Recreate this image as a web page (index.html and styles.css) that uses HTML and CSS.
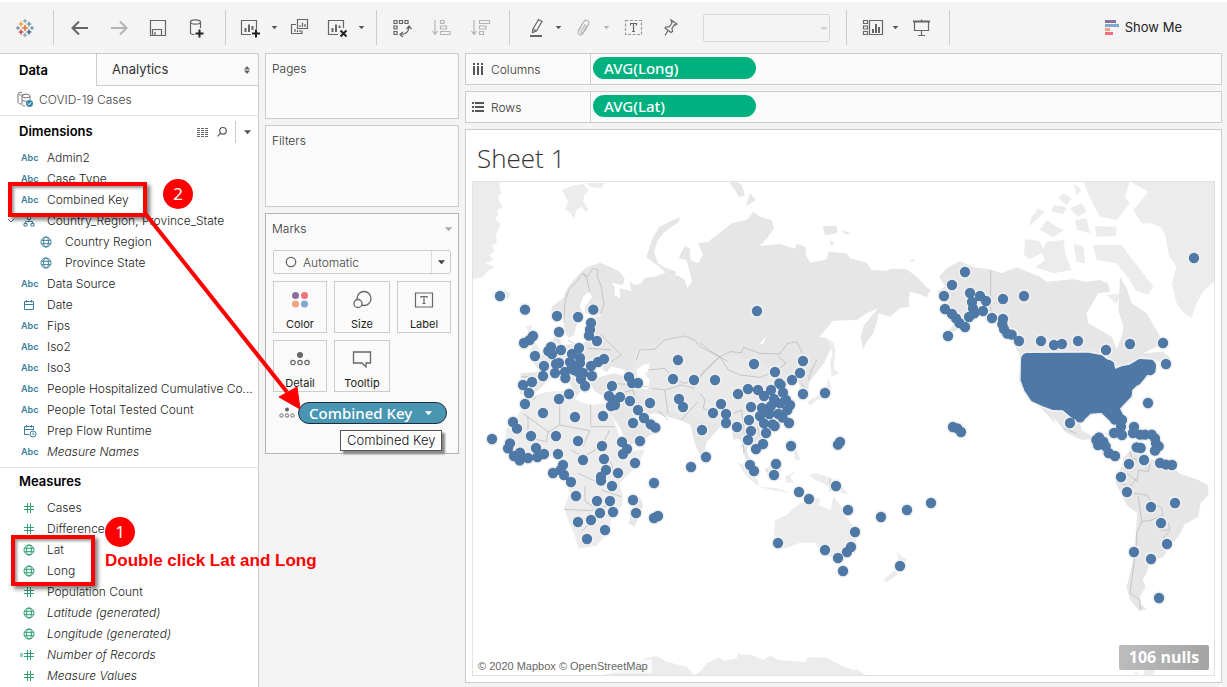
FILE: index.html
```html
<!DOCTYPE html>
<html lang="en">
<head>
<meta charset="utf-8">
<title>Sheet 1</title>
<link rel="stylesheet" href="styles.css">
</head>
<body>
<svg class="sprite" aria-hidden="true">
  <symbol id="globe" viewBox="0 0 12 12"><g fill="none" stroke="currentColor"><circle cx="6" cy="6" r="5"/><ellipse cx="6" cy="6" rx="2.4" ry="5"/><path d="M1.500 4.300h9M1.500 7.700h9"/></g></symbol>
  <symbol id="hash" viewBox="0 0 12 12"><path d="M4.500 1v10M7.500 1v10M1 4.500h10M1 7.500h10" fill="none" stroke="currentColor"/></symbol>
  <symbol id="date" viewBox="0 0 12 12"><path d="M1.500 2.500h9v8h-9zM1.500 5.500h9M3.500 1v2.500M8.500 1v2.500" fill="none" stroke="currentColor"/></symbol>
  <symbol id="caret" viewBox="0 0 10 6"><path d="M1 1h8L5 5.500z" fill="currentColor"/></symbol>
</svg>

<header class="toolbar">
  <button class="tool" aria-label="Start page"><svg viewBox="0 0 24 24" fill="none" stroke-width="1.500"><path d="M12 9v6M9 12h6" stroke="#e8762c" stroke-width="1.600"/><path d="M8 5.500v5M5.500 8h5" stroke="#eb9129"/><path d="M16 5.500v5M13.500 8h5" stroke="#5b879b"/><path d="M8 13.500v5M5.500 16h5" stroke="#c72035"/><path d="M16 13.500v5M13.500 16h5" stroke="#1f457e"/><path d="M12 3v4M10 5h4M12 17v4M10 19h4" stroke="#7099a6" stroke-width="1"/><path d="M5 10v4M3 12h4M19 10v4M17 12h4" stroke="#59879b" stroke-width="1"/></svg></button>
  <span class="sep"></span>
  <button class="tool" aria-label="Undo"><svg viewBox="0 0 24 24"><path d="M20 12H5M11 5.500L4.500 12l6.500 6.500" stroke-width="2"/></svg></button>
  <button class="tool off" aria-label="Redo"><svg viewBox="0 0 24 24"><path d="M4 12h15M13 5.500l6.500 6.500-6.500 6.500" stroke-width="2"/></svg></button>
  <button class="tool" aria-label="Save"><svg viewBox="0 0 24 24"><path d="M4.500 4.500h15v15h-15zM6.500 19v-5.500h9V19M9 19v-3"/></svg></button>
  <button class="tool" aria-label="New data source"><svg viewBox="0 0 24 24"><ellipse cx="10.500" cy="6" rx="5" ry="2.200"/><path d="M5.500 6v11c0 1 2 1.500 4 1.500M15.500 6v6"/><path d="M14.500 13.500v8M10.500 17.500h8" class="strong"/></svg></button>
  <span class="sep"></span>
  <button class="tool" aria-label="New worksheet"><svg viewBox="0 0 24 24"><path d="M11 18.500H1.500v-14h15V13"/><path d="M5.500 16v-4M9 16V8.500M12.500 14V10" stroke-width="2"/><path d="M16 13.500v8M12 17.500h8" class="strong"/></svg></button>
  <button class="caret" aria-label="New worksheet options"><svg viewBox="0 0 10 6"><use href="#caret"/></svg></button>
  <button class="tool" aria-label="Duplicate"><svg viewBox="0 0 24 24"><path d="M9.500 3.500h10v9h-10zM8 8.500H3.500v9H14V14.500M12 11V9M14.500 11V6.500M17 11V8M7 16v-3M9.500 16v-2M12 16v-2"/></svg></button>
  <button class="tool" aria-label="Clear sheet"><svg viewBox="0 0 24 24"><path d="M11 18.500H1.500v-14h15V12"/><path d="M5.500 16v-4M9 16V8.500M12.500 12V9.500" stroke-width="2"/><path d="M13.500 14.500l6 6M19.500 14.500l-6 6" class="strong"/></svg></button>
  <button class="caret" aria-label="Clear options"><svg viewBox="0 0 10 6"><use href="#caret"/></svg></button>
  <span class="sep tight"></span>
  <button class="tool" aria-label="Swap rows and columns"><svg viewBox="0 0 24 24"><path d="M3 4.500h3v3H3zM8.500 4.500h3v3h-3zM14 4.500h3v3h-3zM3 10h3v3H3zM3 15.500h3v3H3zM9 18.500c6 0 9-3 9-8M15.500 13l2.500-3 2.500 3M12 16l-3 2.500 3 2.500"/></svg></button>
  <button class="tool off" aria-label="Sort ascending"><svg viewBox="0 0 24 24"><path d="M5 4v13M2.500 15L5 18.500 7.500 15M10.500 4.500h3.500v3h-3.500zM10.500 10h6v3h-6zM10.500 15.500h9.500v3h-9.500z"/></svg></button>
  <button class="tool off" aria-label="Sort descending"><svg viewBox="0 0 24 24"><path d="M5 4v13M2.500 15L5 18.500 7.500 15M10.500 4.500h10v3h-10zM10.500 10h6.500v3h-6.500zM10.500 15.500h4v3h-4z"/></svg></button>
  <span class="sep"></span>
  <button class="tool" aria-label="Highlight"><svg viewBox="0 0 24 24"><path d="M9 13L14.500 3.500l3.500 2-5.500 9.500L8.500 16.500zM9 13l3.500 2"/><path d="M6 20h12" stroke-width="2"/></svg></button>
  <button class="caret" aria-label="Highlight options"><svg viewBox="0 0 10 6"><use href="#caret"/></svg></button>
  <button class="tool off" aria-label="Group members"><svg viewBox="0 0 24 24"><path d="M6.500 14l5-8c2-3.500 7-1.500 5 2.500l-5.500 9c-2 3-6.500 1-4.500-2.500l4.500-8M13.500 8L9 15.500c-1 1.500 1 2.500 2 1l4-7"/></svg></button>
  <button class="caret off" aria-label="Group options"><svg viewBox="0 0 10 6"><use href="#caret"/></svg></button>
  <button class="tool" aria-label="Show mark labels"><svg viewBox="0 0 24 24"><path d="M5.500 4.500h16v14h-16z" stroke-dasharray="3 1.500" class="light"/><path d="M10.500 9.500V7.500h6v2M13.500 7.500v8M12 15.500h3"/></svg></button>
  <button class="tool" aria-label="Fix axes"><svg viewBox="0 0 24 24"><path d="M12 4l6 4-1.500 1-1-.5-2.500 4 .5 3-1.500 1-6-4.500 1.500-1 3-.3 2.500-4zM9 14.500L6 19.500"/></svg></button>
  <select class="fit" aria-label="Fit" disabled><option></option></select>
  <span class="sep"></span>
  <button class="tool" aria-label="Show cards"><svg viewBox="0 0 24 24"><path d="M2.500 4.500h4v3h-4zM2.500 10h4v3h-4zM2.500 15.500h4v3h-4zM8.500 4.500h13v14h-13z"/><path d="M12 17v-4M15 17V8M18 17v-6" stroke-width="2"/></svg></button>
  <button class="caret" aria-label="Card options"><svg viewBox="0 0 10 6"><use href="#caret"/></svg></button>
  <button class="tool" aria-label="Presentation mode"><svg viewBox="0 0 24 24"><path d="M5.500 6v8.500h14V6M12.500 14.500v4.500M9 19.500h7M12.500 3.500v2"/><path d="M4 5.500h17" stroke-width="2"/></svg></button>
  <span class="sep"></span>
  <button class="showme"><svg viewBox="0 0 14 15" aria-hidden="true"><path d="M0 0h11v3H0z" fill="#8a6f9c"/><path d="M0 4h14v3H0z" fill="#82a6cd"/><path d="M0 8h5v3H0z" fill="#f2a27e"/><path d="M0 12h8v3H0z" fill="#f56f7e"/></svg>Show Me</button>
</header>

<div class="workspace">
  <aside class="data">
    <div class="tabs">
      <button class="tab active">Data</button>
      <button class="tab">Analytics<svg viewBox="0 0 6 8" aria-hidden="true"><path d="M0 3.500L3 0l3 3.500zM0 4.500L3 8l3-3.500z" fill="#666"/></svg></button>
    </div>
    <div class="source"><svg viewBox="0 0 17 17" aria-hidden="true"><g fill="none" stroke="#777"><path d="M5 1.500C2 1 1 2 1 3v8c0 1 1 2 3 2"/><path d="M1.500 3c1 1.500 5 1.500 7 0"/><ellipse cx="9" cy="5" rx="4" ry="1.800"/><path d="M5 5v8c0 1 1 2 3 2M13 5v4M5 9c1 1 3 1.500 5 1"/></g><circle cx="12.500" cy="12.500" r="3.500" fill="#3a87a8"/><path d="M10.800 12.500l1.300 1.300 2-2.500" fill="none" stroke="#fff"/></svg>COVID-19 Cases</div>
    <section class="pane">
      <div class="panehead"><h2>Dimensions</h2>
        <button class="mini" aria-label="View"><svg viewBox="0 0 12 10"><path d="M0 1.500h12M0 3.500h12M0 5.500h12M0 7.500h12M0 9.500h12" stroke="#666" stroke-dasharray="3 1"/></svg></button>
        <button class="mini" aria-label="Find"><svg viewBox="0 0 12 12"><g fill="none" stroke="#555" stroke-width="1.200"><circle cx="7" cy="4.800" r="3.300"/><path d="M4.500 7.300L1.500 10.300"/></g></svg></button>
        <button class="mini menu" aria-label="Menu"><svg viewBox="0 0 10 6"><use href="#caret"/></svg></button>
      </div>
      <ul class="fields dim">
        <li><i>Abc</i>Admin2</li>
        <li><i>Abc</i>Case Type</li>
        <li><i>Abc</i>Combined Key</li>
        <li class="group"><svg class="twist" viewBox="0 0 8 6"><path d="M1 1l3 3 3-3" fill="none" stroke="#666"/></svg><svg viewBox="0 0 12 12"><path d="M4.500 1.500h3v3h-3zM6 4.500V6.500M2.500 8.500v-2h7v2M1 8.500h3v2.500H1zM8 8.500h3v2.500H8z" fill="none" stroke="currentColor"/></svg>Country_Region, Province_State</li>
        <li class="child"><svg><use href="#globe"/></svg>Country Region</li>
        <li class="child"><svg><use href="#globe"/></svg>Province State</li>
        <li><i>Abc</i>Data Source</li>
        <li><svg><use href="#date"/></svg>Date</li>
        <li><i>Abc</i>Fips</li>
        <li><i>Abc</i>Iso2</li>
        <li><i>Abc</i>Iso3</li>
        <li><i>Abc</i>People Hospitalized Cumulative Co...</li>
        <li><i>Abc</i>People Total Tested Count</li>
        <li><svg class="wide" viewBox="0 0 14 14"><g fill="none" stroke="currentColor"><path d="M6 10.500H1.500v-8h9V6M1.500 5.500h9M3.500 1v2.500M8.500 1v2.500"/><circle cx="10" cy="10" r="3"/><path d="M10 8.500v1.700h1.300"/></g></svg>Prep Flow Runtime</li>
        <li class="gen"><i>Abc</i>Measure Names</li>
      </ul>
    </section>
    <section class="pane second">
      <div class="panehead"><h2>Measures</h2></div>
      <ul class="fields mea">
        <li><svg><use href="#hash"/></svg>Cases</li>
        <li><svg><use href="#hash"/></svg>Difference</li>
        <li><svg><use href="#globe"/></svg>Lat</li>
        <li><svg><use href="#globe"/></svg>Long</li>
        <li><svg><use href="#hash"/></svg>Population Count</li>
        <li class="gen"><svg><use href="#globe"/></svg>Latitude (generated)</li>
        <li class="gen"><svg><use href="#globe"/></svg>Longitude (generated)</li>
        <li class="gen"><svg viewBox="0 0 12 12" overflow="visible"><path d="M4.500 1v10M7.500 1v10M1 4.500h10M1 7.500h10M-3 5h3M-3 7h3" fill="none" stroke="currentColor"/></svg>Number of Records</li>
        <li class="gen"><svg><use href="#hash"/></svg>Measure Values</li>
      </ul>
    </section>
  </aside>

  <div class="cards">
    <section class="card pages"><h3>Pages</h3></section>
    <section class="card filters"><h3>Filters</h3></section>
    <section class="card marks">
      <div class="markhead"><h3>Marks</h3><svg viewBox="0 0 10 6"><use href="#caret"/></svg></div>
      <div class="marktype">
        <svg viewBox="0 0 12 12"><circle cx="6" cy="6" r="4.700" fill="none" stroke="#666" stroke-width="1.300"/></svg>
        <select aria-label="Mark type"><option>Automatic</option></select>
        <svg class="drop" viewBox="0 0 10 6"><use href="#caret"/></svg>
      </div>
      <div class="props">
        <button><svg viewBox="0 0 20 20"><circle cx="5.500" cy="5.500" r="3.500" fill="#8a6f9c"/><circle cx="14.500" cy="5.500" r="3.500" fill="#f56f7e"/><circle cx="5.500" cy="14" r="3.500" fill="#f2a27e"/><circle cx="14.500" cy="14" r="3.500" fill="#82a6cd"/></svg>Color</button>
        <button><svg viewBox="0 0 20 20"><g fill="#fafafa" stroke="#666" stroke-width="1.300"><circle cx="12" cy="8.500" r="7"/><circle cx="6" cy="13.500" r="4"/></g></svg>Size</button>
        <button><svg viewBox="0 0 20 20"><path d="M1.500 3h17v14h-17zM7 8V6.500h6V8M10 6.500v7M8.500 13.500h3" fill="none" stroke="#666" stroke-width="1.200"/></svg>Label</button>
        <button><svg viewBox="0 0 20 20"><circle cx="10" cy="6" r="3" fill="#666"/><g fill="none" stroke="#666" stroke-width="1.200"><circle cx="3" cy="13.500" r="2.200"/><circle cx="10" cy="13.500" r="2.200"/><circle cx="17" cy="13.500" r="2.200"/></g></svg>Detail</button>
        <button><svg viewBox="0 0 20 20"><path d="M1.500 3h17v11H14v4l-4-4H1.500z" fill="none" stroke="#666" stroke-width="1.300"/></svg>Tooltip</button>
      </div>
      <div class="markpill">
        <svg viewBox="0 0 16 12"><circle cx="8" cy="2.500" r="2" fill="#666"/><g fill="none" stroke="#666"><circle cx="2.500" cy="8.500" r="1.700"/><circle cx="8" cy="8.500" r="1.700"/><circle cx="13.500" cy="8.500" r="1.700"/></g></svg>
        <button class="pill blue">Combined Key<svg viewBox="0 0 10 6"><use href="#caret"/></svg></button>
        <span class="tip" role="tooltip">Combined Key</span>
      </div>
    </section>
  </div>

  <main class="sheetcol">
    <div class="shelf"><div class="shelflabel"><svg viewBox="0 0 12 12"><path d="M2 0v2M6 0v2M10 0v2M2 3v9M6 3v9M10 3v9" stroke="#555" stroke-width="2"/></svg>Columns</div><button class="pill green">AVG(Long)</button></div>
    <div class="shelf"><div class="shelflabel"><svg viewBox="0 0 12 12"><path d="M0 2h2M0 6h2M0 10h2M3 2H12M3 6H12M3 10H12" stroke="#555" stroke-width="2"/></svg>Rows</div><button class="pill green">AVG(Lat)</button></div>
    <section class="sheet">
      <h1>Sheet 1</h1>
      <div class="map">
        <svg class="world" viewBox="0 0 2229 1485" preserveAspectRatio="xMidYMid slice" role="img" aria-label="World map of cases">
          <defs>
            <g id="points">
              <path transform="translate(-12 -3)" d="M96 348h0M171 389h0M267 408h0M330 411h0M376 389h0M369 429h0M366 449h0M363 467h0M387 483h0M273 456h0M195 468h0M185 480h0M168 489h0M201 528h0M249 501h0M241 513h0M252 522h0M279 510h0M312 522h0M333 504h0M228 558h0M264 552h0M273 549h0M225 588h0M261 579h0M306 546h0M312 558h0M336 534h0M336 549h0M318 570h0M291 576h0M292 594h0M330 576h0M345 579h0M339 597h0M351 618h0M372 588h0M369 558h0M390 546h0M408 537h0M192 606h0M165 615h0M183 639h0M171 672h0M273 657h0M303 642h0M432 618h0M423 648h0M435 660h0M456 651h0M429 678h0M441 675h0M486 663h0M483 591h0M492 609h0M510 609h0M546 669h0M510 690h0M528 714h0M495 729h0M548 733h0M562 743h0M225 699h0M321 711h0M405 708h0M135 726h0M147 746h0M630 540h0M615 597h0M678 600h0M741 600h0M633 657h0M645 681h0M759 672h0M735 699h0"/>
              <path transform="translate(-12 657)" d="M72 117h0M126 130h0M120 145h0M189 108h0M264 108h0M330 123h0M204 144h0M138 168h0M156 158h0M155 181h0M180 174h0M208 171h0M228 162h0M270 162h0M285 195h0M278 210h0M288 225h0M255 219h0M309 246h0M345 180h0M402 138h0M408 177h0M414 210h0M399 230h0M399 242h0M432 258h0M450 219h0M465 162h0M477 147h0M462 126h0M516 123h0M501 189h0M324 288h0M387 303h0M426 303h0M396 339h0M435 336h0M369 360h0M330 366h0M411 390h0M357 417h0M495 300h0M504 339h0M558 354h0M570 348h0M558 249h0M669 201h0M714 171h0M702 90h0"/>
              <path transform="translate(684 -3)" d="M171 393h0M162 552h0M309 543h0M225 576h0M300 579h0M276 600h0M238 610h0M242 614h0M114 642h0M144 627h0M174 630h0M192 648h0M213 630h0M249 638h0M222 657h0M309 642h0M375 639h0M78 702h0M78 729h0M111 741h0M153 681h0M186 684h0M213 678h0M240 670h0M258 660h0M270 675h0M262 690h0M180 708h0M147 720h0M153 753h0M192 730h0M208 702h0M235 702h0M248 713h0M218 733h0M224 738h0M267 729h0M198 759h0"/>
              <path transform="translate(684 657)" d="M144 120h0M168 147h0M189 132h0M150 195h0M162 213h0M228 192h0M222 225h0M273 138h0M297 276h0M327 297h0M408 258h0M420 126h0M414 134h0M444 330h0M465 396h0M543 351h0M621 330h0M693 309h0M234 429h0M375 450h0M414 474h0M441 456h0M453 441h0M429 513h0M600 498h0"/>
              <path transform="translate(1374 -3)" d="M792 234h0M105 276h0M66 315h0M42 348h0M45 387h0M120 339h0M150 348h0M168 363h0M126 366h0M129 385h0M133 400h0M117 411h0M159 393h0M186 414h0M219 357h0M282 348h0M66 402h0M78 415h0M88 429h0M105 441h0M54 468h0M219 417h0M217 432h0M222 447h0M232 461h0M245 464h0M267 483h0M333 483h0M372 495h0M396 492h0M444 483h0M528 510h0M600 492h0M699 489h0M708 552h0M654 669h0M420 729h0M290 536h0M535 555h0M450 712h0M630 553h0M662 556h0M660 570h0M620 600h0M590 640h0M573 720h0M555 719h0"/>
              <path transform="translate(1374 657)" d="M69 81h0M82 85h0M93 96h0M552 99h0M576 60h0M573 80h0M576 105h0M612 81h0M609 99h0M630 104h0M645 104h0M665 104h0M675 115h0M678 130h0M686 139h0M675 152h0M507 112h0M499 120h0M504 135h0M520 125h0M527 139h0M536 159h0M555 168h0M620 142h0M632 144h0M597 192h0M642 180h0M690 189h0M708 194h0M726 195h0M573 231h0M591 276h0M663 321h0M735 309h0M693 369h0M711 432h0M612 456h0M663 477h0M687 594h0"/>
            </g>
            <path id="states" transform="translate(1374 -3)" d="M292 523Q278 524 277 540L276 600 287 630 307 660 340 675 370 686 400 687 432 714 465 712 480 697 515 694 548 725 580 730 586 720 575 705 565 685 600 648 603 628 620 612 635 600 650 580 672 575 674 558 665 543 630 541 600 558 575 563 552 572 548 550 530 542 515 530 475 522z"/>
          </defs>
          <g class="land">
            <g transform="translate(-12 -3)">
              <path class="pale" d="M12 3H97L95 25 101 40 90 48 92 62 105 80 88 90 90 105 82 115 98 132 90 150 84 165 86 190 72 198 80 212 65 225 76 240 52 250 80 262 62 270 45 290 12 298z"/>
              <path class="pale" d="M282 30L310 18 345 12 362 30 350 45 345 62 360 85 355 98 340 80 325 90 318 118 305 95 292 90 300 65zM352 10L410 8 400 25 370 22zM72 335L85 345 110 328 128 338 125 355 100 364 80 360zM174 440L192 432 190 448 200 480 217 512 182 524 195 490zM152 490L172 480 176 500 155 508z"/>
              <path d="M638 112L630 128 590 155 570 180 558 215 570 250 590 262 625 275 620 285 600 285 575 262 560 250 535 232 545 200 555 170 575 140 610 122z"/>
              <path d="M395 248L430 262 455 275 470 295 465 315 430 308 440 320 440 345 456 355 455 325 490 334 485 303 498 315 520 310 530 293 560 290 590 278 632 288 650 300 658 325 672 305 665 275 655 240 632 235 650 198 665 205 668 240 690 250 705 225 690 190 720 185 756 158 746 166 791 130 836 120 856 95 876 110 911 120 918 145 901 170 876 198 936 192 981 206 986 192 1012 200 1014 225 1026 248 1076 238 1081 215 1136 220 1146 235 1196 248 1211 270 1256 272 1270 266 1316 268 1346 290 1372 318 1388 330 1376 352 1346 340 1326 335 1322 362 1324 380 1296 385 1266 410 1232 400 1226 430 1216 460 1192 492 1186 510 1178 470 1188 435 1231 385 1196 400 1166 420 1096 422 1054 470 1076 475 1090 500 1071 545 1041 585 1024 605 1020 635 996 650 997 620 991 608 971 616 956 600 936 605 946 625 941 640 971 670 978 690 961 720 916 745 891 740 901 770 886 800 866 815 846 790 836 810 858 868 846 860 826 820 824 790 811 775 796 780 791 745 756 742 716 785 710 810 697 828 680 790 668 735 640 722 600 710 560 700 540 705 575 735 573 753 540 770 500 790 478 795 460 750 430 705 425 680 422 645 400 645 378 632 368 608 390 592 440 580 482 592 460 568 430 560 415 577 392 558 372 580 366 600 360 640 345 635 335 600 320 590 345 625 325 650 300 600 270 585 250 592 220 622 185 655 155 640 158 580 215 575 195 545 240 510 262 465 276 472 280 495 350 490 350 440 365 415 405 405 375 405 352 400 350 385 372 350 362 335 345 350 335 380 347 400 325 435 318 465 300 475 288 440 290 415 262 428 248 410 252 380 285 355 300 320 330 285 352 264z"/>
              <path class="pale" d="M175 658L205 645 240 635 318 630 325 660 365 675 425 668 430 705 448 750 460 795 480 815 531 808 510 855 455 910 465 950 462 978 430 1005 427 1050 385 1098 332 1106 318 1060 300 1020 288 985 305 940 295 905 270 875 272 845 240 825 190 838 140 845 108 800 115 745 145 715z"/>
              <path class="pale" d="M500 510L640 470 760 520 850 540 940 580 930 690 860 730 760 740 700 720 620 700 540 690 490 600z" opacity=".5"/>
              <path d="M515 950L526 975 500 1040 482 1030 492 990z"/>
              <path class="sea" d="M505 570L525 555 545 550 542 572 530 580 545 600 540 628 522 628 518 600 508 588zM450 582L482 588 470 570 440 562z"/>
            </g>
            <g transform="translate(684 -3)">
              <path d="M88 8L110 6 125 15 135 45 118 52 105 30zM150 40L168 60 138 78zM368 138L410 138 412 160 375 165zM425 150l25 8-12 6zM388 180l15 10-8 8zM625 242l20-5-5 8z"/>
              <path class="pale" d="M382 478L400 485 406 510 402 565 418 580 395 590 390 550 397 520zM385 595L395 630 365 650 330 678 322 665 355 645 378 625z"/>
              <path class="sea" d="M200 465L190 490 178 494 190 478z"/>
            </g>
            <g transform="translate(684 657)" class="pale">
              <path d="M110 185L130 195 175 240 175 258 145 235zM175 260L230 264 272 278 225 272zM195 208L225 190 245 200 235 235 205 232zM255 230l35-18-20 18 12 18-25 0zM265 105l10 20 15 20 10 35-15 0-5-30zM325 225L350 220 395 235 430 265 446 284 400 270 370 250 345 240z"/>
              <path d="M362 298L340 292 320 310 298 310 275 330 260 345 225 360 222 400 236 448 260 445 300 428 345 428 370 460 400 475 425 485 445 470 468 430 467 390 440 350 420 315 400 288 392 330 355 315zM420 502h20l-8 20zM590 453l14 18 18 5-16 24-8-14zM582 512L596 522 562 547 549 541z"/>
              <path d="M0 815L20 790 55 773 75 782 110 775 113 757 120 765 150 763 190 780 210 767 235 780 300 785 315 786 325 772 380 773 420 795 460 810 470 808 500 826H-20zM-164 775L-130 768-100 785-40 800-15 828H-300L-250 815z"/>
            </g>
            <g transform="translate(1374 -3)">
              <path class="pale" d="M600 5H852V305L820 333 800 370 785 413 762 400 740 370 725 310 740 260 718 230 705 160 690 140 660 130 635 130 610 90 635 60 655 35z"/>
              <path class="pale" d="M460 5H600L585 50 600 70 560 120 510 110 490 75zM430 10L455 30 440 45zM400 40L425 55 410 75 385 55zM370 75L410 82 400 102 365 95zM325 85L345 95 298 138 305 110zM330 150L350 120 380 140 402 150 370 172zM420 85L455 70 470 95 445 110zM435 120L470 115 480 160 440 150zM495 138L560 140 558 168 500 170zM285 178L330 183 342 215 300 238 282 225zM350 185L402 180 405 220 425 270 370 280 315 262 345 240 335 215zM430 190L460 200 465 250 440 245zM490 195L575 195 600 230 625 260 670 320 655 345 615 330 600 300 560 250 500 240zM530 345L570 340 560 372z"/>
              <path d="M28 290L50 265 90 243 130 262 180 268 215 280 260 262 330 290 350 305 430 298 470 305 510 300 535 312 540 335 505 340 470 400 475 430 520 455 545 470 560 507 575 470 580 440 565 390 570 290 590 325 605 370 650 400 685 460 700 490 640 520 700 515 722 535 700 545 640 540 555 580 500 560 275 540 265 515 250 490 205 450 190 410 150 405 120 420 80 450 40 470 75 430 45 385 60 375 20 335 45 320z"/>
              <path d="M330 680L376 731 372 715 350 685 405 755 455 780 500 775 545 825 560 830 540 800 510 770 480 765 455 750 445 710 400 690zM520 758l50 5 15 14-40-8z"/>
            </g>
            <g transform="translate(1374 657)">
              <path d="M580 175L600 152 625 158 690 190 735 200 745 220 800 238 835 255 835 285 812 310 805 350 765 372 745 410 715 440 702 470 658 485 652 515 638 540 647 560 630 590 632 612 650 628 628 633 600 600 590 560 605 500 615 430 622 340 590 315 555 245 575 200z"/>
              <path class="pale" d="M610 820l12-5 4 10zM640 826L650 790 700 735 690 770 670 826z"/>
            </g>
          </g>
          <g class="borders">
            <path transform="translate(-12 -3)" d="M288 428L290 370 302 330 330 300 345 280 358 290 375 265 390 270 388 290 400 320 408 375 398 400M345 280L358 300 365 335M378 475L400 465 425 490 460 525 430 545M360 505L430 510M350 510L300 480M380 530L360 560M290 550L340 570M505 540L515 510 560 508 590 480 650 468 680 480 695 500 725 515 755 530 780 545M540 570L590 565 620 600 650 610 690 598 710 570 755 530M550 625L590 630 640 615 680 625M590 630L600 700M455 640L495 630 510 690M165 700L240 755 235 785 190 775M205 650L195 660M275 670L275 735 240 757M368 672V740M275 735L365 752 345 800M370 740H440M180 710L180 770M310 810L345 830 400 800 425 750M330 880L385 905M288 988L365 992 430 975M350 920L352 965 385 985M400 930L460 950M425 840L450 900M365 1000V1030L340 1055M570 690L600 720M640 720L690 665M160 590L215 590M440 610L540 620"/>
            <path transform="translate(684 -3)" d="M0 490L30 512 60 530 90 515 125 518 130 502 180 520 240 522 262 490 290 485 308 520M60 530L85 570 120 585 180 592 225 575 258 550 235 530M0 590L20 570 60 530M350 540L335 570 325 600M0 640L15 660 10 685 30 695M100 700L125 690 135 780 125 800M170 740L185 780M305 610L315 625"/>
            <path transform="translate(684 657)" d="M390 235V275M195 205L205 215M130 130L132 160"/>
            <path transform="translate(1374 -3)" d="M182 270V390L200 420M400 745L440 760"/>
            <path transform="translate(1374 657)" d="M600 155L605 175 625 180M660 190L655 215 625 210 622 245 590 220M560 245L600 260 620 235M612 280L650 285 660 300 695 325 698 345 665 360 635 365 625 290M635 365L620 400 620 440 612 490 600 580 630 600V630M690 390H720L715 370M720 395L698 415"/>
          </g>
          <use href="#states" class="us-halo"/>
          <use href="#points" class="halo"/>
          <use href="#states" class="us"/>
          <use href="#points" class="dots"/>
        </svg>
        <span class="credit">© 2020 Mapbox © OpenStreetMap</span>
        <button class="nulls">106 nulls</button>
      </div>
    </section>
  </main>
</div>

<div class="note box-key"></div>
<div class="note box-geo"></div>
<svg class="arrow" viewBox="0 0 170 210" aria-hidden="true"><path d="M6 6L149 186" stroke="#f00" stroke-width="4"/><path d="M162 203L141 191 159 181z" fill="#f00" stroke="#f00"/></svg>
<span class="step step-two">2</span>
<span class="step step-one">1</span>
<strong class="caption">Double click Lat and Long</strong>
</body>
</html>
```
FILE: styles.css
```css
* { box-sizing: border-box; }
body {
  margin: 0;
  min-height: 100vh;
  display: flex;
  flex-direction: column;
  position: relative;
  overflow: hidden;
  border-top: 2px solid #fff;
  background: #f4f4f4;
  color: #222;
  font: 12px/21px Inter, "Liberation Sans", sans-serif;
}
.sprite { position: absolute; width: 0; height: 0; }
button, select { font: inherit; color: inherit; margin: 0; padding: 0; border: 0; background: none; }
svg { display: block; flex: none; }
h1, h2, h3, ul { margin: 0; padding: 0; font-weight: 400; }

/* Toolbar */
.toolbar { display: flex; align-items: center; height: 51px; padding: 0 45px 0 13px; color: #666; }
.tool { width: 24px; height: 24px; margin-right: 15px; }
.tool svg { width: 24px; height: 24px; fill: none; stroke: currentColor; stroke-width: 1.2; }
.tool .strong { stroke: #222; stroke-width: 2; }
.tool .light { stroke: #999; }
.tool:has(+ .sep) { margin-right: 0; }
.toolbar .off { color: #b4b4b4; }
.caret { width: 10px; height: 24px; margin-left: -10px; margin-right: 9px; color: #555; }
.caret svg { width: 7px; height: 5px; margin: 0 auto; }
.sep { width: 1px; height: 35px; margin: 0 14px 0 16px; background: #ccc; }
.sep.tight { margin-left: 1px; }
.fit { width: 127px; height: 28px; margin-left: 5px; border: 1px solid #ccc; border-radius: 2px; appearance: none;
  background: conic-gradient(from -60deg at 50% 100%, #c4c4c4 120deg, transparent 0) 117px 12px / 6px 3px no-repeat; }
.showme { display: flex; align-items: center; gap: 6px; margin-left: auto; font-size: 13px; color: #222; }
.showme svg { width: 14px; height: 15px; }

/* Main columns */
.workspace { flex: 1; display: flex; align-items: stretch; gap: 6px; padding-right: 5px; }
.data { width: 259px; flex: none; border-right: 1px solid #ccc; border-top: 1px solid #ccc; background: #fff; }
.tabs { display: flex; height: 32px; }
.tab { text-align: left; font-size: 13px; color: #333; }
.tab.active { width: 97px; padding-left: 19px; border-right: 1px solid #ccc; font-weight: 600; color: #000; }
.tab:not(.active) { flex: 1; display: flex; align-items: center; justify-content: space-between; padding: 0 8px 0 15px; border-bottom: 1px solid #ccc; background: #fafafa; }
.tab svg { width: 6px; height: 8px; }
.source { display: flex; align-items: center; gap: 5px; height: 30px; padding-left: 17px; padding-bottom: 2px; border-bottom: 1px solid #e2e2e2; color: #444; font-weight: 300; }
.source svg { width: 17px; height: 17px; }
.panehead { display: flex; align-items: center; height: 31px; padding-left: 19px; }
.panehead h2 { flex: 1; font-size: 13px; font-weight: 600; color: #000; }
.mini { width: 12px; margin-right: 7px; color: #555; }
.mini svg { width: 12px; }
.mini.menu { width: 23px; height: 22px; margin: 0; border-left: 1px solid #ccc; }
.mini.menu svg { width: 9px; height: 6px; margin-left: 7px; }
.second { margin-top: 5px; border-top: 1px solid #e2e2e2; }
.second .panehead { height: 29px; padding-bottom: 2px; }
.fields { list-style: none; font-weight: 300; }
.fields li { display: flex; align-items: center; height: 21px; padding-left: 21px; white-space: nowrap; }
.fields i { width: 26px; font: 600 9px/21px Inter, sans-serif; color: #3c7f9b; }
.fields li > svg { width: 12px; height: 12px; margin: 0 12px 0 2px; }
.fields li > .wide { width: 14px; height: 14px; margin-right: 10px; }
.fields .child { padding-left: 38px; }
.fields .child > svg { margin-right: 13px; }
.fields .group { padding-left: 7px; }
.fields .group .twist { width: 8px; height: 6px; margin: 0 6px 0 0; }
.dim svg { color: #3c7f9b; }
.mea svg { color: #2e9f73; }
.gen { font-style: italic; }

/* Cards */
.cards { width: 194px; flex: none; display: flex; flex-direction: column; gap: 6px; }
.card { border: 1px solid #ccc; background: #fafafa; }
.card h3, .shelflabel { font-size: 12px; font-weight: 300; color: #333; }
.pages { height: 66px; padding: 4px 6px; }
.filters { height: 82px; padding: 4px 6px; }
.marks { padding: 4px 7px 29px; border-color: #b4b4b4; }
.markhead { display: flex; justify-content: space-between; align-items: center; margin: 0 -2px 11px -1px; }
.markhead svg { width: 9px; height: 6px; color: #aaa; }
.marktype { display: grid; grid-template-columns: 29px 1fr 18px; align-items: center; height: 24px; border: 1px solid #ccc; border-radius: 2px; color: #444; font-weight: 300; }
.marktype > svg { width: 12px; height: 12px; margin-left: 11px; }
.marktype select { appearance: none; height: 22px; border-right: 1px solid #ddd; }
.marktype .drop { width: 9px; height: 6px; margin-left: 5px; }
.props { display: grid; grid-template-columns: 54px 56px 54px; justify-content: space-between; gap: 7px 0; margin: 7px 0 10px; }
.props button { height: 52px; padding-top: 8px; border: 1px solid #ccc; font-size: 11px; line-height: 21px; color: #222; }
.props button svg { width: 20px; height: 20px; margin: 0 auto 4px; }
.markpill { display: flex; align-items: center; gap: 3px; position: relative; padding: 0 4px 0 6px; }
.markpill > svg { width: 16px; height: 12px; }
.pill { height: 22px; border-radius: 11px; color: #fff; font: 500 15px/20px "Noto Sans", "Open Sans", sans-serif; text-align: left; }
.blue { flex: 1; display: flex; align-items: center; gap: 12px; padding-left: 10px; border: 1px solid #1d2b45; background: #4996b2; }
.blue svg { width: 9px; height: 6px; }
.tip { position: absolute; left: 67px; top: 28px; height: 21px; padding: 0 6px; border: 1px solid #555; background: #fff; box-shadow: 3px 3px 2px #888; font-size: 13px; line-height: 19px; font-weight: 300; color: #111; white-space: nowrap; }

/* Shelves and sheet */
.sheetcol { flex: 1; min-width: 0; display: flex; flex-direction: column; gap: 6px; padding-bottom: 4px; }
.shelf { display: flex; height: 32px; border: 1px solid #ccc; background: #fafafa; }
.shelflabel { display: flex; align-items: center; gap: 7px; width: 125px; padding-left: 6px; border-right: 1px solid #ccc; }
.shelflabel svg { width: 12px; height: 12px; }
.green { width: 163px; margin: 3px 2px; padding-left: 11px; background: #00b180; }
.sheet { flex: 1; display: flex; flex-direction: column; padding: 0 6px 6px; border: 1px solid #ccc; background: #fff; }
.sheet h1 { height: 51px; padding: 11px 5px 0; font: 300 26px/34px "Open Sans", sans-serif; color: #333; }
.map { flex: 1; position: relative; min-height: 200px; border: 1px solid #e2e2e2; overflow: hidden; }
.world { position: absolute; left: -1px; top: -1px; width: calc(100% + 2px); height: calc(100% + 2px); }
.land { fill: #e6e6e6; }
.pale { fill: #ececec; }
.sea { fill: #fff; }
.borders { fill: none; stroke: #b4b4b4; stroke-width: 2; }
.halo { fill: none; stroke: #f0f0f0; stroke-width: 40; stroke-linecap: round; }
.dots { fill: none; stroke: #4e79a7; stroke-width: 31; stroke-linecap: round; }
.us { fill: #4e79a7; stroke: #4e79a7; stroke-width: 8; stroke-linejoin: round; }
.us-halo { fill: #f0f0f0; stroke: #f0f0f0; stroke-width: 18; stroke-linejoin: round; }
.credit { position: absolute; left: 0; bottom: 2px; padding: 0 4px 0 5px; background: rgba(255, 255, 255, .7); font: 11px/14px "Liberation Sans", sans-serif; color: #666; }
.nulls { position: absolute; right: 5px; bottom: 5px; height: 25px; width: 90px; border-radius: 2px; background: linear-gradient(90deg, #bcbcbc, #a4a4a4); color: #fff; font: 700 16px/25px "Open Sans", sans-serif; }

/* Tutorial annotations */
.note { position: absolute; border: 4px solid #f00; box-shadow: 3px 3px 4px rgba(0, 0, 0, .5), inset 2px 2px 3px rgba(0, 0, 0, .4); }
.box-key { left: 8px; top: 180px; width: 139px; height: 35px; }
.box-geo { left: 11px; top: 533px; width: 84px; height: 51px; }
.arrow { position: absolute; left: 138px; top: 204px; width: 170px; height: 210px; }
.step { position: absolute; width: 30px; height: 30px; border-radius: 50%; background: #f00; color: #fff; font: 17px/30px "Noto Sans", sans-serif; text-align: center; }
.step-two { left: 163px; top: 177px; }
.step-one { left: 105px; top: 515px; }
.caption { position: absolute; left: 105px; top: 549px; font: 700 17px/20px "Liberation Sans", sans-serif; color: #f00; }
```
